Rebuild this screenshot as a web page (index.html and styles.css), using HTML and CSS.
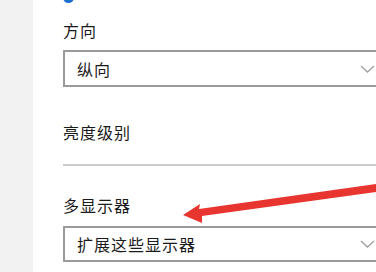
FILE: index.html
```html
<!DOCTYPE html>
<html lang="zh-CN">
<head>
<meta charset="utf-8">
<link rel="stylesheet" href="styles.css">
</head>
<body>
<div class="page">
  <div class="sidebar"></div>
  <div class="main">
    <div class="dot"></div>
    <div class="label first">方向</div>
    <div class="select">
      <span class="value">纵向</span>
      <svg class="chev" width="15" height="8" viewBox="0 0 15 8"><path d="M1 1 L7.5 7 L14 1" fill="none" stroke="#a0a0a0" stroke-width="1.3"/></svg>
    </div>
    <div class="label bright">亮度级别</div>
    <div class="sep"></div>
    <div class="label multi">多显示器</div>
    <div class="select second">
      <span class="value">扩展这些显示器</span>
      <svg class="chev" width="15" height="8" viewBox="0 0 15 8"><path d="M1 1 L7.5 7 L14 1" fill="none" stroke="#a0a0a0" stroke-width="1.3"/></svg>
    </div>
  </div>
  <svg class="arrow" width="376" height="272" viewBox="0 0 376 272">
    <polygon points="183,215 200,204 199,209 376,184 376,192 202,216 202,223" fill="#e8352f"/>
  </svg>
</div>
</body>
</html>
```
FILE: styles.css
```css
html, body {
  margin: 0;
  padding: 0;
  background: #ffffff;
  overflow: hidden;
}
.page {
  position: relative;
  display: flex;
  width: 376px;
  height: 272px;
  overflow: hidden;
  font-family: "Noto Sans CJK SC", "Microsoft YaHei", sans-serif;
  color: #1a1a1a;
}
.sidebar {
  width: 33px;
  flex: none;
  background: #f2f2f2;
}
.main {
  position: relative;
  flex: 1;
  min-width: 0;
  padding-left: 30px;
  display: flex;
  flex-direction: column;
  align-items: stretch;
}
.dot {
  position: absolute;
  left: 30px;
  top: -8px;
  width: 11px;
  height: 11px;
  border-radius: 50%;
  background: #1f6fd1;
}
.label {
  font-size: 16px;
  line-height: 22px;
  letter-spacing: 1px;
  height: 22px;
}
.label.first { margin-top: 19px; }
.label.bright { margin-top: 34px; }
.label.multi { margin-top: 28px; }
.select {
  box-sizing: border-box;
  height: 37px;
  margin-top: 9px;
  margin-right: -40px;
  border: 2px solid #9a9a9a;
  display: flex;
  align-items: center;
  padding: 0 39px 0 12px;
  justify-content: space-between;
}
.select.second {
  height: 36px;
  margin-top: 10px;
}
.value {
  font-size: 16px;
  letter-spacing: 1px;
  color: #1a1a1a;
}
.chev { flex: none; }
.sep {
  height: 2px;
  margin-top: 21px;
  margin-right: -40px;
  background: #cccccc;
}
.arrow {
  position: absolute;
  left: 0;
  top: 0;
  pointer-events: none;
}
```
